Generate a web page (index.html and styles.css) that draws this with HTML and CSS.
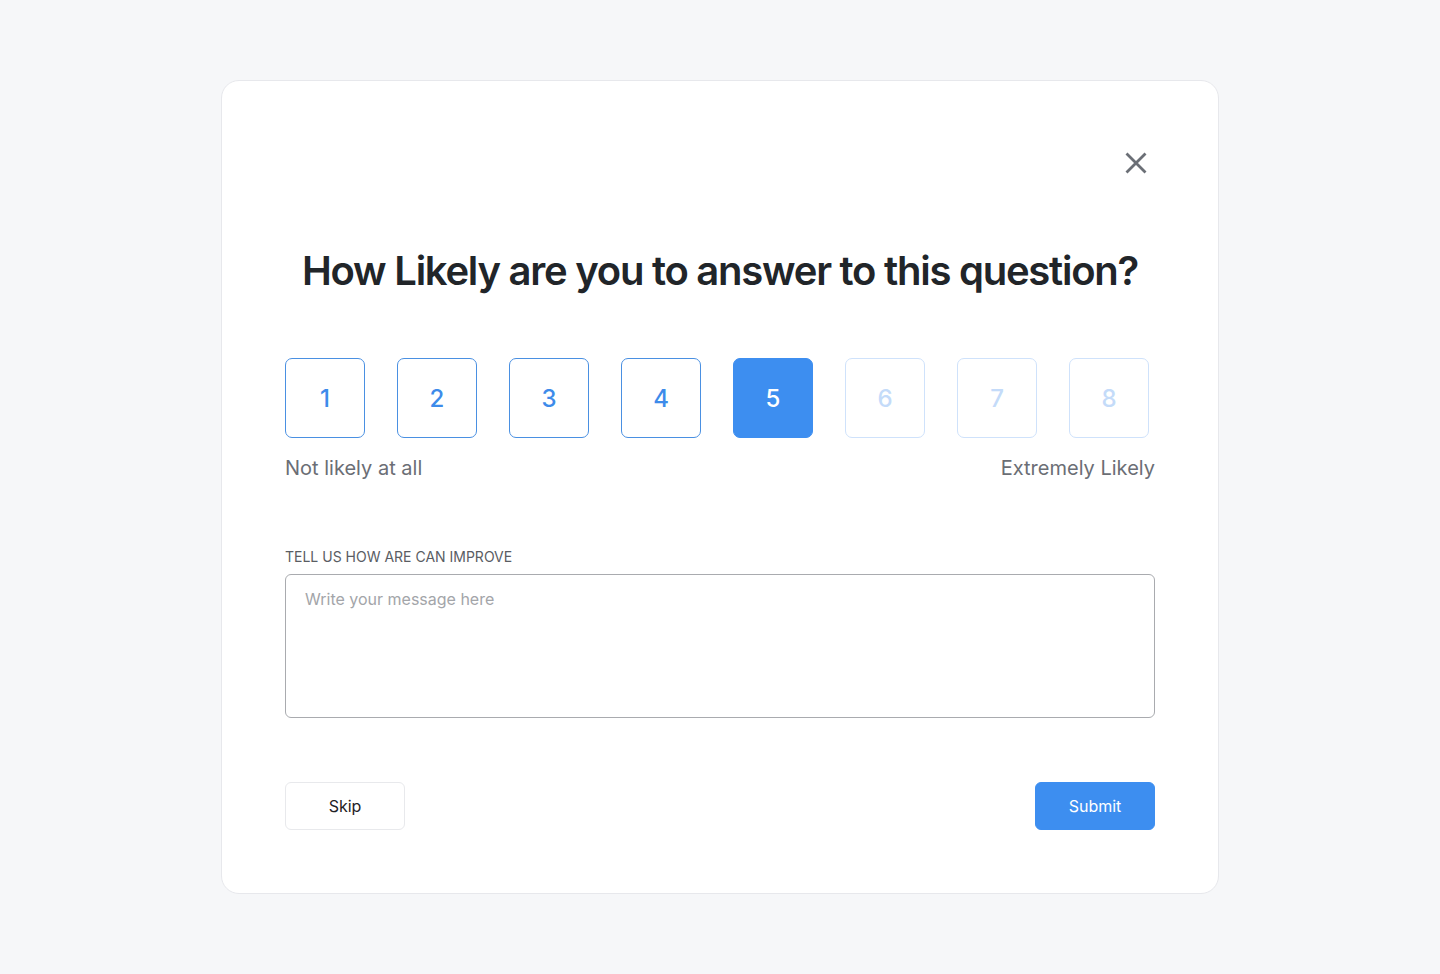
FILE: index.html
```html
<!DOCTYPE html>
<html lang="en">
<head>
<meta charset="utf-8">
<title>Feedback</title>
<link rel="stylesheet" href="styles.css">
</head>
<body>
<div class="page">
  <div class="card">
    <div class="top">
      <button class="close" aria-label="Close">
        <svg width="22" height="22" viewBox="0 0 22 22" fill="none" stroke="#6b6f76" stroke-width="2.8" stroke-linecap="butt"><path d="M1.5 1.5L20.5 20.5M20.5 1.5L1.5 20.5"/></svg>
      </button>
    </div>
    <h1 class="title">How Likely are you to answer to this question?</h1>
    <div class="scale">
      <button class="opt">1</button>
      <button class="opt">2</button>
      <button class="opt">3</button>
      <button class="opt">4</button>
      <button class="opt selected">5</button>
      <button class="opt faded">6</button>
      <button class="opt faded">7</button>
      <button class="opt faded">8</button>
    </div>
    <div class="legend">
      <span>Not likely at all</span>
      <span>Extremely Likely</span>
    </div>
    <label class="field-label">TELL US HOW ARE CAN IMPROVE</label>
    <textarea class="message" placeholder="Write your message here"></textarea>
    <div class="actions">
      <button class="btn skip">Skip</button>
      <button class="btn submit">Submit</button>
    </div>
  </div>
</div>
</body>
</html>
```

FILE: styles.css
```css
* { box-sizing: border-box; }
html, body { margin: 0; padding: 0; }
body {
  background: #f6f7f9;
  font-family: Inter, "Noto Sans", sans-serif;
  width: 1440px;
  height: 974px;
}
.page {
  display: flex;
  justify-content: center;
  padding-top: 80px;
}
.card {
  width: 998px;
  height: 814px;
  background: #ffffff;
  border: 1px solid #e7e8ec;
  border-radius: 18px;
  padding: 0 63px 0 63px;
  display: flex;
  flex-direction: column;
}
.top {
  display: flex;
  justify-content: flex-end;
  padding-top: 71px;
  padding-right: 8px;
}
.close {
  width: 22px;
  height: 22px;
  padding: 0;
  border: 0;
  background: none;
  display: flex;
  align-items: center;
  justify-content: center;
  cursor: pointer;
}
.title {
  margin: 72px 0 0 0;
  text-align: center;
  font-size: 40px;
  line-height: 50px;
  font-weight: 600;
  letter-spacing: -1.25px;
  color: #212529;
}
.scale {
  display: flex;
  gap: 32px;
  margin-top: 62px;
}
.opt {
  width: 80px;
  height: 80px;
  border: 1px solid #4a90e2;
  border-radius: 7px;
  background: #fff;
  color: #3d8bea;
  font-family: Inter, sans-serif;
  font-size: 24px;
  font-weight: 500;
  padding: 0;
}
.opt.selected {
  background: #3d8ef0;
  border-color: #3d8ef0;
  color: #fff;
}
.opt.faded {
  border-color: #cfe2fb;
  color: #c4dbf9;
}
.legend {
  display: flex;
  justify-content: space-between;
  margin-top: 18px;
  font-size: 20px;
  line-height: 24px;
  color: #6b6e75;
}
.field-label {
  margin-top: 68px;
  font-size: 14px;
  line-height: 18px;
  color: #5a5d63;
}
.message {
  margin-top: 8px;
  height: 144px;
  width: 100%;
  border: 1px solid #a9abaf;
  border-radius: 6px;
  padding: 14px 19px;
  font-family: Inter, sans-serif;
  font-size: 16px;
  line-height: 20px;
  resize: none;
  color: #333;
}
.message::placeholder { color: #a3a5a9; }
.actions {
  display: flex;
  justify-content: space-between;
  margin-top: 64px;
}
.btn {
  width: 120px;
  height: 48px;
  border-radius: 6px;
  font-family: Inter, sans-serif;
  font-size: 16px;
  font-weight: 400;
  padding: 0;
}
.skip {
  background: #fff;
  border: 1px solid #e8e9ec;
  color: #1f2226;
}
.submit {
  background: #3d8ef0;
  border: 1px solid #3d8ef0;
  color: #fff;
}
```
